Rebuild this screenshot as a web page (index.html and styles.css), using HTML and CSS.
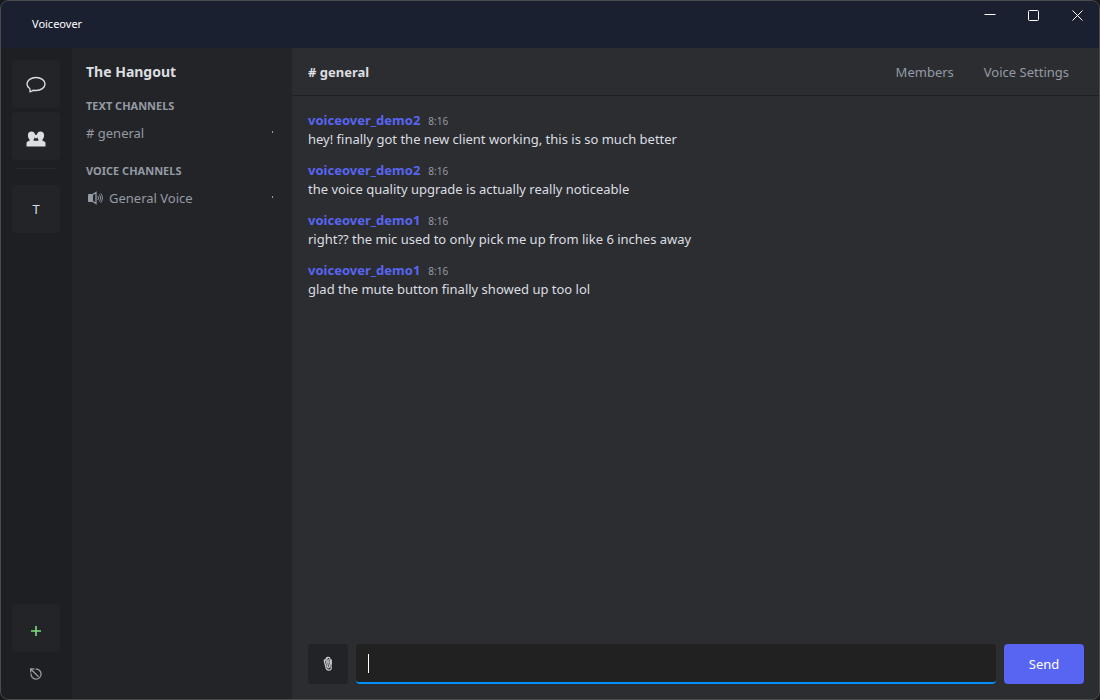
FILE: index.html
```
<!DOCTYPE html>
<html lang="en">
  <head>
    <meta charset="utf-8">
    <title>Voiceover</title>
    <link rel="stylesheet" href="styles.css">
  </head>
  <body>
    <div class="window">
      <header class="titlebar">
        <span class="appName">Voiceover</span>
        <div class="windowButtons">
          <button type="button" aria-label="Minimize">
            <svg width="12" height="12" viewBox="0 0 12 12"><path d="M0.500 4.500h11"/></svg>
          </button>
          <button type="button" aria-label="Maximize">
            <svg width="12" height="12" viewBox="0 0 12 12"><rect x="0.500" y="0.500" width="10" height="10" rx="1"/></svg>
          </button>
          <button type="button" aria-label="Close">
            <svg width="12" height="12" viewBox="0 0 12 12"><path d="M0.500 0.500l10 10M10.500 0.500l-10 10"/></svg>
          </button>
        </div>
      </header>

      <div class="layout">
        <nav class="rail" aria-label="Servers">
          <button class="railButton iconButton" type="button" aria-label="Direct messages">
            <svg width="20" height="18" viewBox="0 0 20 18" fill="none" stroke="#dbdee1" stroke-width="1.400" stroke-linejoin="round">
              <path d="M3.700 12.500C2 11.300 1 9.700 1 8c0-3.700 4-6.500 9-6.500S19 4.300 19 8s-4 6.500-9 6.500c-1 0-2-.1-2.900-.3C6.200 15 5.300 15.500 4 15.900 4.300 14.800 4.200 13.600 3.700 12.500z"/>
            </svg>
          </button>
          <button class="railButton iconButton friends" type="button" aria-label="Friends">
            <svg width="20" height="16" viewBox="0 0 20 16" fill="#dbdee1">
              <path d="M5.500 0.500c2.200 0 3.600 1.500 3.600 3.800 0 1.900-.7 3.300-1.500 4.300v1.200h4.800V8.600c-.8-1-1.500-2.400-1.500-4.300 0-2.300 1.400-3.800 3.600-3.800s3.600 1.500 3.600 3.800c0 1.900-.7 3.300-1.600 4.300v1.200l2 .6c.7.300 1 .9 1 1.800v3.300h-19v-3.300c0-.9.300-1.500 1-1.800l2-.6V8.600C2.600 7.600 1.900 6.200 1.900 4.300c0-2.300 1.400-3.800 3.600-3.800z"/>
              <path d="M9 3.800h2v3.400H9z"/>
            </svg>
          </button>
          <div class="divider"></div>
          <button class="railButton" type="button">T</button>
          <button class="railButton addServer" type="button" aria-label="Add server">
            <svg width="12" height="12" viewBox="0 0 12 12" stroke="#7be07b" stroke-width="1.600"><path d="M1 6h10M6 1v10"/></svg>
          </button>
          <button class="logout" type="button" aria-label="Log out">
            <svg width="12" height="12" viewBox="0 0 12 12" fill="none" stroke="#949ba4" stroke-width="1.300">
              <path d="M5.500 1.100A5 5 0 1 1 1.100 5.500M0.600 4.600V0.800H4.400M1 1.200l7.500 7.500"/>
            </svg>
          </button>
        </nav>

        <aside class="channels">
          <h1>The Hangout</h1>
          <h2>TEXT CHANNELS</h2>
          <button class="channel" type="button">
            <span># general</span>
            <i class="dot"></i>
          </button>
          <h2>VOICE CHANNELS</h2>
          <button class="channel" type="button">
            <svg width="19" height="14" viewBox="0 0 19 14" fill="none" stroke="#949ba4">
              <path d="M2.500 3.500h4v7h-4z" fill="#949ba4"/>
              <path d="M6.500 3.800l3.500-2.300v11l-3.500-2.300" stroke-width="1.300"/>
              <path d="M11.800 5c.8 1.200.8 2.800 0 4M13.300 3.500c1.700 2 1.700 5 0 7M14.700 2.300c2.200 2.700 2.200 6.700 0 9.400"/>
            </svg>
            <span>General Voice</span>
            <i class="dot"></i>
          </button>
        </aside>

        <main class="chat">
          <header class="chatHeader">
            <h2># general</h2>
            <button type="button">Members</button>
            <button type="button">Voice Settings</button>
          </header>

          <div class="messages">
            <article class="message">
              <div><strong>voiceover_demo2</strong><time>8:16</time></div>
              <p>hey! finally got the new client working, this is so much better</p>
            </article>
            <article class="message">
              <div><strong>voiceover_demo2</strong><time>8:16</time></div>
              <p>the voice quality upgrade is actually really noticeable</p>
            </article>
            <article class="message">
              <div><strong>voiceover_demo1</strong><time>8:16</time></div>
              <p>right?? the mic used to only pick me up from like 6 inches away</p>
            </article>
            <article class="message">
              <div><strong>voiceover_demo1</strong><time>8:16</time></div>
              <p>glad the mute button finally showed up too lol</p>
            </article>
          </div>

          <form class="composer">
            <button class="attach" type="button" aria-label="Attach file">
              <svg width="10" height="16" viewBox="0 0 10 16" fill="none" stroke="#c4c6c9" stroke-width="1.300">
                <path d="M1.200 4.500l2 7.800c.8 2.800 5.600 2.400 5-1L7 3C6.700 0.600 3 0.900 3.200 3.500l1.300 7.200c.3 1.500 2 1.300 1.900-.2L5.400 4.500M0.800 4.500l4-2.500M8.300 3.500v5"/>
                <path d="M2 4l4-1 .5 4-3 .5z" fill="#a5a7aa" stroke="none"/>
              </svg>
            </button>
            <div class="field">
              <input id="messageInput" type="text" aria-label="Message" autocomplete="off">
              <span class="caret"></span>
            </div>
            <button class="send" type="submit">Send</button>
          </form>
        </main>
      </div>
    </div>
  </body>
</html>
```
FILE: styles.css
```
* {
  box-sizing: border-box;
}
body {
  margin: 0;
  background-color: #17181a;
  color: #dbdee1;
  font-family: 'Segoe UI', 'Noto Sans', 'Open Sans', sans-serif;
  font-size: 13px;
  line-height: 20px;
}
h1,
h2,
p {
  margin: 0;
}
button {
  padding: 0;
  border: none;
  background: none;
  color: inherit;
  font: inherit;
}
svg {
  display: block;
}
.window {
  position: relative;
  display: flex;
  flex-direction: column;
  height: 100vh;
  border-radius: 8px;
  overflow: hidden;
}
/* frame drawn over the panels so it takes no space */
.window::after {
  content: '';
  position: absolute;
  inset: 0;
  border: 1px solid #4a4b4d;
  border-radius: 8px;
  pointer-events: none;
}
.titlebar {
  display: flex;
  justify-content: space-between;
  height: 48px;
  padding-left: 32px;
  background-color: #1b2030;
  color: white;
}
.appName {
  align-self: center;
  font-size: 11px;
}
.windowButtons {
  display: flex;
}
.windowButtons button {
  display: grid;
  place-items: center;
  width: 44px;
  height: 32px;
}
.windowButtons svg {
  fill: none;
  stroke: white;
}
.layout {
  display: flex;
  flex: 1;
  min-height: 0;
}
.rail {
  display: flex;
  flex-direction: column;
  align-items: center;
  gap: 4px;
  width: 72px;
  padding: 12px 0;
  background-color: #1e1f22;
}
.railButton {
  display: grid;
  place-items: center;
  width: 48px;
  height: 48px;
  border-radius: 4px;
  background-color: #232428;
}
.iconButton {
  padding-top: 2px;
}
.friends {
  padding-top: 6px;
}
.divider {
  width: 40px;
  height: 1px;
  margin: 4px 0 12px;
  background-color: #26272b;
}
.addServer {
  margin-top: auto;
  padding-top: 6px;
}
.logout {
  display: grid;
  place-items: center;
  width: 48px;
  height: 32px;
  padding-top: 4px;
}
.channels {
  width: 220px;
  padding: 14px;
  background-color: #232428;
}
.channels h1 {
  margin-bottom: 14px;
  font-size: 14px;
  line-height: 20px;
}
.channels h2 {
  color: #949ba4;
  font-size: 11px;
  line-height: 20px;
}
.channel {
  display: flex;
  align-items: center;
  gap: 4px;
  width: 100%;
  height: 34px;
  margin-bottom: 11px;
  padding-right: 5px;
  color: #949ba4;
}
.dot {
  width: 1px;
  height: 2px;
  margin: 0 0 2px auto;
  background-color: #949ba4;
}
.chat {
  display: flex;
  flex: 1;
  flex-direction: column;
  min-width: 0;
  background-color: #2c2d31;
}
.chatHeader {
  display: flex;
  align-items: center;
  gap: 30px;
  height: 48px;
  padding: 0 31px 0 16px;
  border-bottom: 1px solid #1e1f22;
}
.chatHeader h2 {
  margin-right: auto;
  font-size: 13px;
}
.chatHeader button {
  color: #949ba4;
}
.messages {
  flex: 1;
  padding: 15px 16px;
  overflow: hidden;
}
.message {
  margin-bottom: 12px;
  line-height: 19px;
}
.message strong {
  color: #5865f2;
}
.message time {
  margin-left: 8px;
  color: #949ba4;
  font-size: 10px;
  line-height: 10px;
}
.composer {
  display: flex;
  gap: 8px;
  padding: 16px;
}
.attach {
  display: grid;
  place-items: center;
  width: 40px;
  height: 40px;
  border-radius: 4px;
  background-color: #222327;
}
.field {
  position: relative;
  flex: 1;
}
.field input {
  display: block;
  width: 100%;
  height: 40px;
  padding: 0 12px;
  border: none;
  border-bottom: 2px solid #0091f8;
  border-radius: 4px;
  outline: none;
  background-color: #212122;
  color: white;
  font: inherit;
}
.caret {
  position: absolute;
  top: 10px;
  left: 12px;
  width: 1px;
  height: 19px;
  background-color: white;
}
.send {
  width: 80px;
  height: 40px;
  border-radius: 4px;
  background-color: #5865f2;
  color: white;
}
```
